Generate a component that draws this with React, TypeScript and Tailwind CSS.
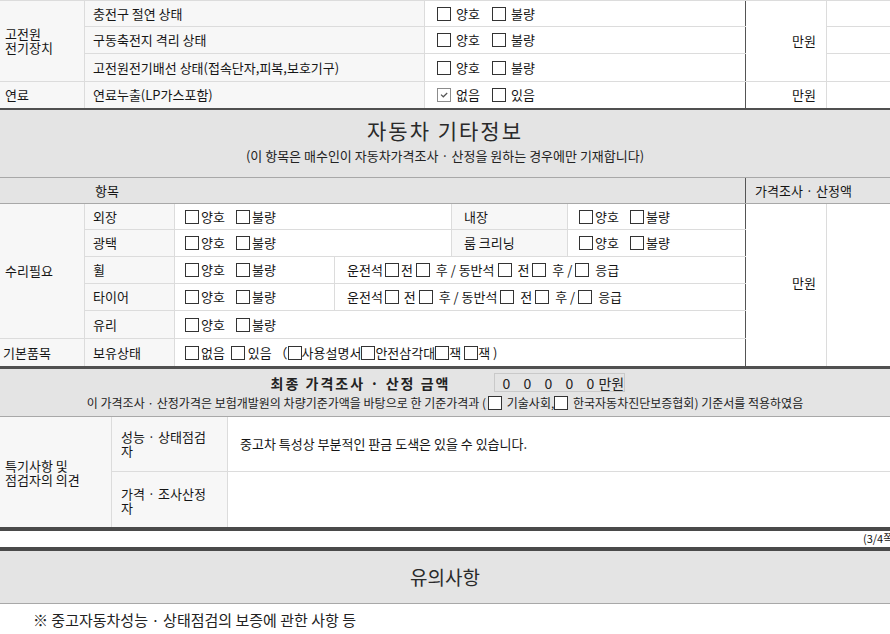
import React from "react";

function Box({ checked = false, className = "" }: { checked?: boolean; className?: string }) {
  return (
    <span
      className={
        "inline-flex shrink-0 items-center justify-center w-[14px] h-[14px] border bg-white " +
        (checked ? "border-[#8c8c8c] " : "border-[#333] ") +
        className
      }
    >
      {checked && (
        <svg width="10" height="10" viewBox="0 0 10 10">
          <path d="M2 4.6 L4.3 6.8 L8.2 3" fill="none" stroke="#555" strokeWidth="1.2" />
        </svg>
      )}
    </span>
  );
}

function TopChecks({ a, b, checkedA = false }: { a: string; b: string; checkedA?: boolean }) {
  return (
    <div className="flex items-center h-full pl-[12px]">
      <Box checked={checkedA} />
      <span className="ml-[5px]">{a}</span>
      <Box className="ml-[12px]" />
      <span className="ml-[5px]">{b}</span>
    </div>
  );
}

function RChecks({ pl = "pl-[10px]" }: { pl?: string }) {
  return (
    <div className={"flex items-center h-full " + pl}>
      <Box />
      <span className="ml-[2px]">양호</span>
      <Box className="ml-[11px]" />
      <span className="ml-[2px]">불량</span>
    </div>
  );
}

const L = "border-[#dcdcdc]";

export default function App() {
  return (
    <div className="w-[890px] overflow-hidden bg-white text-[13px] leading-[16px] text-[#151515] font-['Noto_Sans_CJK_KR','Noto_Sans',sans-serif]">
      {/* Top section */}
      <div className="grid grid-cols-[85px_340px_321px_81px_63px] grid-rows-[26px_27px_28px_26px] border-t border-[#dcdcdc]">
        <div className={"row-span-3 bg-[#f7f7f7] border-r border-b flex items-center pl-[5px] leading-[14px] " + L}>
          고전원
          <br />
          전기장치
        </div>
        <div className={"bg-[#f7f7f7] border-r border-b flex items-center pl-[8px] " + L}>충전구 절연 상태</div>
        <div className={"border-b border-r-0 " + L}>
          <div className="h-full border-r border-[#555]">
            <TopChecks a="양호" b="불량" />
          </div>
        </div>
        <div className={"row-span-3 border-r border-b flex items-center justify-end pr-[10px] " + L}>만원</div>
        <div className={"border-b " + L}></div>

        <div className={"bg-[#f7f7f7] border-r border-b flex items-center pl-[8px] " + L}>구동축전지 격리 상태</div>
        <div className={"border-b " + L}>
          <div className="h-full border-r border-[#555]">
            <TopChecks a="양호" b="불량" />
          </div>
        </div>
        <div className={"border-b " + L}></div>

        <div className={"bg-[#f7f7f7] border-r border-b flex items-center pl-[8px] " + L}>
          고전원전기배선 상태(접속단자,피복,보호기구)
        </div>
        <div className={"border-b " + L}>
          <div className="h-full border-r border-[#555]">
            <TopChecks a="양호" b="불량" />
          </div>
        </div>
        <div className={"border-b " + L}></div>

        <div className={"bg-[#f7f7f7] border-r flex items-center pl-[5px] " + L}>연료</div>
        <div className={"bg-[#f7f7f7] border-r flex items-center pl-[8px] " + L}>연료누출(LP가스포함)</div>
        <div className="border-r border-[#555]">
          <TopChecks a="없음" b="있음" checkedA />
        </div>
        <div className={"border-r flex items-center justify-end pr-[10px] " + L}>만원</div>
        <div></div>
      </div>
      <div className="h-[2px] bg-[#505050]"></div>

      {/* Section header */}
      <div className="h-[68px] bg-[#e4e4e4] border-b border-[#a8a8a8] flex flex-col items-center pt-[8px]">
        <div className="text-[21px] leading-[24px] tracking-[2px] text-[#2a2a2a]">자동차 기타정보</div>
        <div className="mt-[6px] text-[13px] leading-[16px] text-[#222]">
          (이 항목은 매수인이 자동차가격조사 · 산정을 원하는 경우에만 기재합니다)
        </div>
      </div>
      <div className="h-[26px] bg-[#e4e4e4] border-b border-[#a8a8a8] grid grid-cols-[85px_661px_144px]">
        <div></div>
        <div className="border-r border-[#555] flex items-center pl-[10px]">항목</div>
        <div className="flex items-center pl-[9px]">가격조사 · 산정액</div>
      </div>

      {/* Repair grid */}
      <div className="grid grid-cols-[85px_90px_160px_117px_116px_178px_81px_63px] grid-rows-[26px_27px_27px_27px_28px_27px]">
        {/* row1 */}
        <div className={"row-span-5 bg-[#f7f7f7] border-r border-b flex items-center pl-[5px] " + L}>수리필요</div>
        <div className={"bg-[#f7f7f7] border-r border-b flex items-center pl-[8px] " + L}>외장</div>
        <div className={"col-span-2 border-r border-b " + L}>
          <RChecks />
        </div>
        <div className={"bg-[#f7f7f7] border-r border-b flex items-center pl-[12px] " + L}>내장</div>
        <div className={"border-b " + L}>
          <div className="h-full border-r border-[#555]">
            <RChecks pl="pl-[11px]" />
          </div>
        </div>
        <div className={"row-span-6 border-r flex items-center justify-end pr-[10px] pb-[4px] " + L}>만원</div>
        <div className="row-span-6"></div>

        {/* row2 */}
        <div className={"bg-[#f7f7f7] border-r border-b flex items-center pl-[8px] " + L}>광택</div>
        <div className={"col-span-2 border-r border-b " + L}>
          <RChecks />
        </div>
        <div className={"bg-[#f7f7f7] border-r border-b flex items-center pl-[12px] " + L}>룸 크리닝</div>
        <div className={"border-b " + L}>
          <div className="h-full border-r border-[#555]">
            <RChecks pl="pl-[11px]" />
          </div>
        </div>

        {/* row3 */}
        <div className={"bg-[#f7f7f7] border-r border-b flex items-center pl-[8px] " + L}>휠</div>
        <div className={"border-r border-b " + L}>
          <RChecks />
        </div>
        <div className={"col-span-3 border-b " + L}>
          <div className="h-full border-r border-[#555] flex items-center pl-[12px] whitespace-pre">
            운전석
            <Box className="mx-[2px]" />전<Box className="mx-[3px]" /> 후 / 동반석<Box className="mx-[3px]" /> 전
            <Box className="mx-[3px]" /> 후 /<Box className="mx-[3px]" /> 응급
          </div>
        </div>

        {/* row4 */}
        <div className={"bg-[#f7f7f7] border-r border-b flex items-center pl-[8px] " + L}>타이어</div>
        <div className={"border-r border-b " + L}>
          <RChecks />
        </div>
        <div className={"col-span-3 border-b " + L}>
          <div className="h-full border-r border-[#555] flex items-center pl-[12px] whitespace-pre">
            운전석
            <Box className="mx-[2px]" /> 전<Box className="mx-[3px]" /> 후 / 동반석<Box className="mx-[3px]" /> 전
            <Box className="mx-[3px]" /> 후 /<Box className="mx-[3px]" /> 응급
          </div>
        </div>

        {/* row5 */}
        <div className={"bg-[#f7f7f7] border-r border-b flex items-center pl-[8px] " + L}>유리</div>
        <div className={"col-span-4 border-b " + L}>
          <div className="h-full border-r border-[#555]">
            <RChecks />
          </div>
        </div>

        {/* row6 */}
        <div className={"bg-[#f7f7f7] border-r flex items-center pl-[3px] " + L}>기본품목</div>
        <div className={"bg-[#f7f7f7] border-r flex items-center pl-[8px] " + L}>보유상태</div>
        <div className="col-span-4 border-r border-[#555] flex items-center pl-[10px] whitespace-pre">
          <Box />
          <span className="ml-[2px]">없음 </span>
          <Box className="ml-[3px]" />
          <span> 있음 （</span>
          <Box />
          <span>사용설명서</span>
          <Box />
          <span>안전삼각대</span>
          <Box />
          <span>잭</span>
          <Box className="ml-[3px]" />
          <span>잭 )</span>
        </div>
      </div>
      <div className="h-[3px] bg-[#505050]"></div>

      {/* Final amount */}
      <div className="h-[48px] bg-[#e4e4e4] border-b border-[#a8a8a8] flex flex-col items-center pt-[4px]">
        <div className="flex items-center h-[19px] gap-[44px] ml-[6px]">
          <div className="font-bold text-[14px] tracking-[2px] text-[#222]">최종 가격조사 · 산정 금액</div>
          <div className="h-[19px] w-[131px] border border-[#c9c9c9] flex items-center pl-[7px] text-[14px] text-[#222]">
            <span className="w-[21px]">0</span>
            <span className="w-[21px]">0</span>
            <span className="w-[21px]">0</span>
            <span className="w-[21px]">0</span>
            <span className="w-[12px]">0</span>
            <span>만원</span>
          </div>
        </div>
        <div className="mt-[2px] text-[12px] leading-[18px] flex items-center whitespace-pre text-[#222]">
          이 가격조사 · 산정가격은 보험개발원의 차량기준가액을 바탕으로 한 기준가격과 (
          <Box className="w-[13px] h-[13px] mx-[2px]" /> 기술사회,
          <Box className="w-[13px] h-[13px] mr-[2px]" /> 한국자동차진단보증협회) 기준서를 적용하였음
        </div>
      </div>

      {/* Special notes */}
      <div className="grid grid-cols-[112px_116px_662px] grid-rows-[55px_55px]">
        <div className={"row-span-2 bg-[#f7f7f7] border-r flex items-center pl-[5px] leading-[14px] pt-[2px] " + L}>
          특기사항 및
          <br />
          점검자의 의견
        </div>
        <div className={"bg-[#f7f7f7] border-r border-b flex items-center pl-[9px] leading-[14px] " + L}>
          <div>
            성능 · 상태점검
            <br />자
          </div>
        </div>
        <div className={"border-b flex items-center pl-[12px] " + L}>중고차 특성상 부분적인 판금 도색은 있을 수 있습니다.</div>
        <div className={"bg-[#f7f7f7] border-r flex items-center pl-[9px] leading-[14px] pt-[2px] " + L}>
          <div>
            가격 · 조사산정
            <br />자
          </div>
        </div>
        <div></div>
      </div>
      <div className="h-[4px] bg-[#4a4a4a]"></div>
      <div className="h-[16px] flex items-start justify-end text-[11px] leading-[12px] pt-[1px] mr-[-7px]">(3/4쪽)</div>
      <div className="h-[4px] bg-[#4a4a4a]"></div>

      {/* Notes */}
      <div className="h-[53px] bg-[#e4e4e4] border-b border-[#a8a8a8] flex items-center justify-center text-[19px] text-[#2a2a2a]">
        유의사항
      </div>
      <div className="h-[40px] flex items-start pt-[8px] pl-[33px] text-[15px] text-[#222]">
        ※ 중고자동차성능 · 상태점검의 보증에 관한 사항 등
      </div>
    </div>
  );
}
